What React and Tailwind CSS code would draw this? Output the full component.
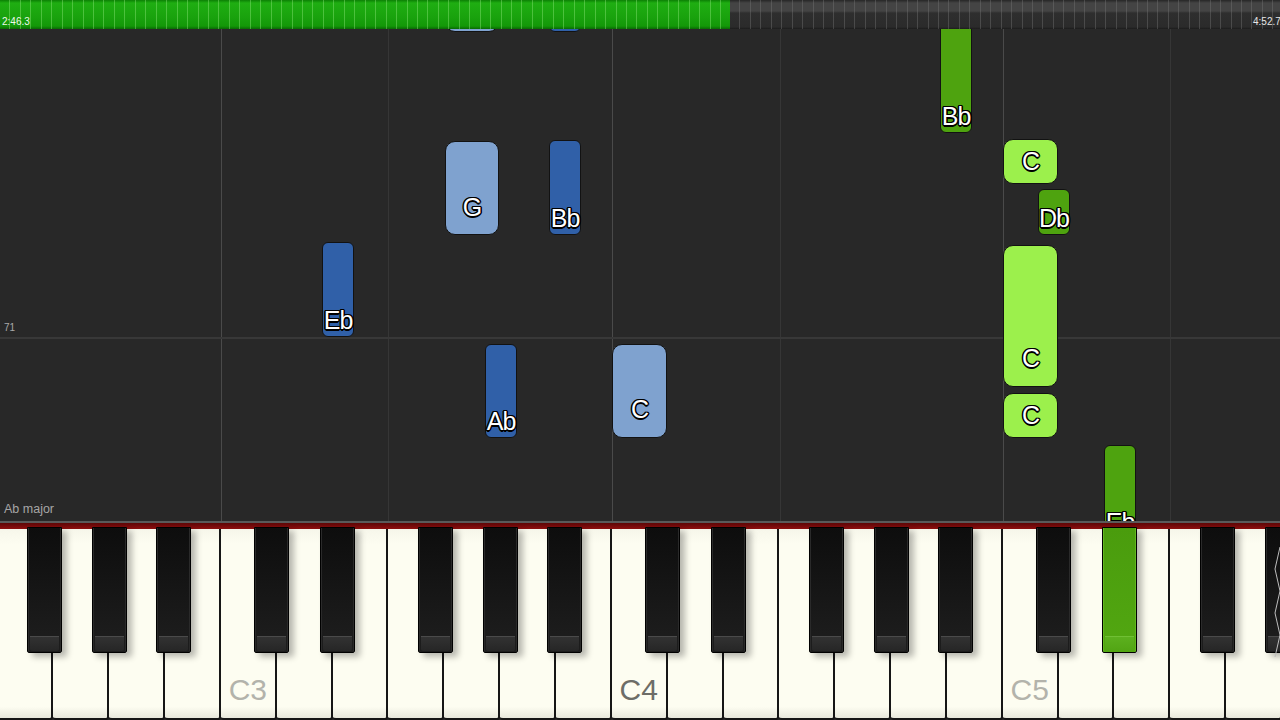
import React from "react";

const W = 391 / 7;
const WHITE_NAMES = ["F", "G", "A", "B", "C", "D", "E"];
const LABELS = { 4: ["C3", "text-[#b3b3ab]"], 11: ["C4", "text-[#6d6d67]"], 18: ["C5", "text-[#b3b3ab]"] };

const blackKeys = [];
for (let k = -1; k <= 2; k++) {
  const c = 221 + k * 391;
  for (const o of [33, 99, 197, 262, 326]) {
    const l = c + o;
    if (l > -40 && l < 1290) blackKeys.push(l);
  }
}

// y values in page coords; roll starts at y=29
const notes = [
  { x: 445, w: 54, t: -70, b: 32, kind: "lb", label: "" },
  { x: 549, w: 32, t: -70, b: 32, kind: "db", label: "" },
  { x: 445, w: 54, t: 141, b: 235, kind: "lb", label: "G" },
  { x: 549, w: 32, t: 140, b: 235, kind: "db", label: "Bb" },
  { x: 322, w: 32, t: 242, b: 337, kind: "db", label: "Eb" },
  { x: 485, w: 32, t: 344, b: 438, kind: "db", label: "Ab" },
  { x: 612, w: 55, t: 344, b: 438, kind: "lb", label: "C" },
  { x: 940, w: 32, t: 10, b: 133, kind: "dg", label: "Bb" },
  { x: 1003, w: 55, t: 139, b: 184, kind: "lg", label: "C" },
  { x: 1038, w: 32, t: 189, b: 235, kind: "dg", label: "Db" },
  { x: 1003, w: 55, t: 245, b: 387, kind: "lg", label: "C" },
  { x: 1003, w: 55, t: 393, b: 438, kind: "lg", label: "C" },
  { x: 1104, w: 32, t: 445, b: 539, kind: "dg", label: "Eb" },
];

const KIND = {
  lb: "bg-[#7fa2cf] rounded-[10px]",
  db: "bg-[#3060a8] rounded-[6px]",
  lg: "bg-[#9cf04c] rounded-[10px]",
  dg: "bg-[#4ea30f] rounded-[6px]",
};

const outline =
  "[text-shadow:-1px_-1px_0_#000,1px_-1px_0_#000,-1px_1px_0_#000,1px_1px_0_#000,0_-1.5px_0_#000,0_1.5px_0_#000,-1.5px_0_0_#000,1.5px_0_0_#000]";

function Note({ n }) {
  const h = n.b - n.t;
  const lh = Math.min(h, n.w);
  return (
    <div
      className={`absolute flex flex-col justify-end border-[1.5px] border-[#121212] ${KIND[n.kind]}`}
      style={{ left: n.x, top: n.t - 29, width: n.w, height: h }}
    >
      {n.label && (
        <div className="flex items-center justify-center" style={{ height: lh }}>
          <span className={`text-[25px] leading-none tracking-[-1px] text-white ${outline}`}>{n.label}</span>
        </div>
      )}
    </div>
  );
}

function BlackKey({ left, pressed }) {
  return (
    <div
      className={`absolute top-[6px] h-[126px] w-[35px] rounded-b-[2px] border border-black flex flex-col justify-end px-[2px] pb-[1px] ${
        pressed
          ? "bg-[linear-gradient(to_bottom,#4a9c0d,#52a711)] shadow-[inset_1px_0_0_#62b820,inset_-1px_0_0_#62b820,5px_4px_6px_rgba(0,0,0,0.28)]"
          : "bg-[linear-gradient(to_bottom,#0d0d0d,#1c1c1c_85%)] shadow-[inset_1px_0_0_#2a2a2a,inset_-1px_0_0_#2a2a2a,5px_4px_6px_rgba(0,0,0,0.28)]"
      }`}
      style={{ left }}
    >
      <div
        className={`h-[15px] rounded-b-[2px] border-t ${
          pressed
            ? "border-[#70bf34] bg-[linear-gradient(to_bottom,#5cb01e,#52a514)]"
            : "border-[#4a4a4a] bg-[linear-gradient(to_bottom,#323232,#262626)]"
        }`}
      />
    </div>
  );
}

export default function App() {
  const verticals = [
    [221, "bg-[#4a4a4a]"],
    [388, "bg-[#363636]"],
    [612, "bg-[#4a4a4a]"],
    [780, "bg-[#363636]"],
    [1003, "bg-[#4a4a4a]"],
    [1170, "bg-[#363636]"],
  ];
  return (
    <div className="w-[1280px] h-[720px] overflow-hidden flex flex-col bg-[#282828] font-['Liberation_Sans',Arial,sans-serif]">
      {/* time bar */}
      <div className="relative h-[29px] flex shrink-0">
        <div className="w-[730px] h-full bg-[linear-gradient(to_bottom,#0c8005_0px,#1fae12_3px,#19a20d_60%,#139808_26px,#0a6a04_29px)]">
          <div className="w-full h-full bg-[repeating-linear-gradient(90deg,rgba(0,0,0,0)_0px,rgba(0,0,0,0)_9.45px,rgba(150,235,130,0.4)_9.45px,rgba(150,235,130,0.4)_10.45px)]" />
        </div>
        <div className="flex-1 h-full bg-[linear-gradient(to_bottom,#262626_0px,#444444_3px,#444444_11px,#2e2e2e_13px,#2b2b2b_27px,#1c1c1c_29px)]">
          <div className="w-full h-full bg-[repeating-linear-gradient(90deg,rgba(0,0,0,0)_0px,rgba(0,0,0,0)_9.45px,rgba(120,120,120,0.4)_9.45px,rgba(120,120,120,0.4)_10.45px)]" />
        </div>
        <span className="absolute left-[2px] top-[17px] text-[10px] leading-[10px] text-[#eef8ea]">2:46.3</span>
        <span className="absolute left-[1253px] top-[17px] text-[10px] leading-[10px] text-[#e6e6e6] whitespace-nowrap">4:52.7</span>
      </div>

      {/* roll */}
      <div className="relative h-[492px] shrink-0 overflow-hidden bg-[#282828]">
        {verticals.map(([x, c]) => (
          <div key={x} className={`absolute top-0 bottom-0 w-[1.5px] ${c}`} style={{ left: x - 0.5 }} />
        ))}
        <div className="absolute left-0 right-0 top-[308px] h-[1.5px] bg-[#383838]" />
        <span className="absolute left-[4px] top-[294px] text-[10px] leading-[10px] text-[#a8a8a8]">71</span>
        <span className="absolute left-[4px] top-[473px] text-[12.5px] leading-[14px] text-[#a6a6a6]">Ab major</span>
        {notes.map((n, i) => (
          <Note key={i} n={n} />
        ))}
      </div>

      {/* keyboard */}
      <div className="relative flex-1 flex flex-col">
        <div className="h-[2px] bg-[#5a5a5a] shrink-0" />
        <div className="h-[6px] bg-[linear-gradient(to_bottom,#5e0606,#8e1010)] shrink-0" />
        <div className="flex-1 flex ml-[-2.43px]">
          {Array.from({ length: 24 }).map((_, i) => {
            const lab = LABELS[i];
            return (
              <div
                key={i}
                className="relative h-full w-[55.857px] shrink-0 bg-[linear-gradient(to_bottom,#f6f6ea,#fdfdf1_8%,#fdfdf1_94%,#e8e8dc)] border-r-2 border-b-[2px] border-[#161616] rounded-b-[3px] flex items-end justify-center pb-[13px]"
                data-name={WHITE_NAMES[i % 7]}
              >
                {lab && (
                  <span className={`text-[30px] leading-[30px] ${lab[1]}`}>{lab[0]}</span>
                )}
              </div>
            );
          })}
        </div>
        {blackKeys.map((l) => (
          <BlackKey key={l} left={l} pressed={l === 1102} />
        ))}
        <svg className="absolute right-0 top-[8px]" width="6" height="130" viewBox="0 0 6 130">
          <polyline points="6,18 1,40 6,62 1,84 6,106 1,128" fill="none" stroke="#bdbdbd" strokeWidth="1" />
        </svg>
      </div>
    </div>
  );
}
